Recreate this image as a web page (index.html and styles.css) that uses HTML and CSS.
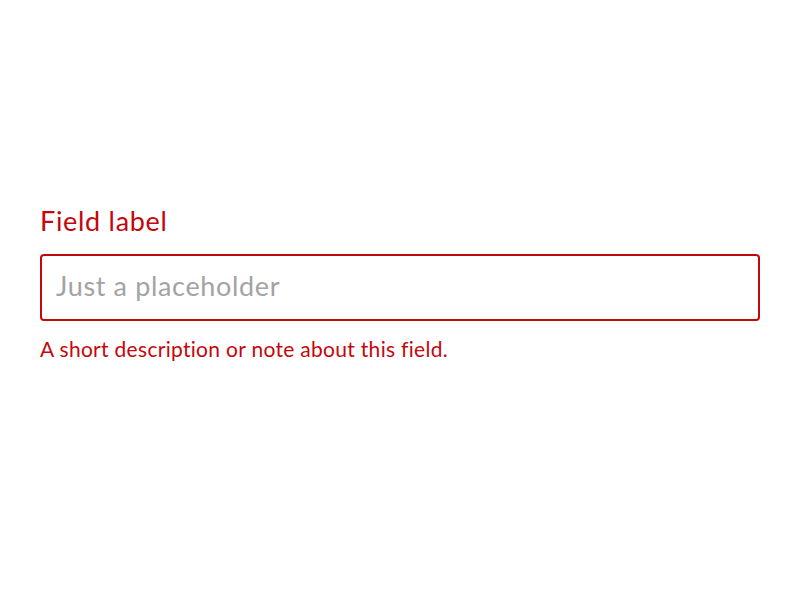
FILE: index.html
```html
<!DOCTYPE html>
<html>
<head>
<meta charset="utf-8">
<link rel="stylesheet" href="styles.css">
</head>
<body>
<div class="field">
  <label class="label" for="f">Field label</label>
  <input class="input" id="f" type="text" placeholder="Just a placeholder">
  <p class="note">A short description or note about this field.</p>
</div>
</body>
</html>
```

FILE: styles.css
```css
html, body {
  margin: 0;
  background: #fff;
}
body {
  font-family: Lato, "Open Sans", sans-serif;
}
.field {
  display: flex;
  flex-direction: column;
  padding: 204px 40px 0;
}
.label {
  color: #c4070d;
  font-size: 27px;
  line-height: 34px;
  letter-spacing: 0.7px;
  margin-bottom: 16px;
}
.input {
  box-sizing: border-box;
  width: 720px;
  height: 67px;
  border: 2px solid #c4070d;
  border-radius: 4px;
  padding: 0 14px 5px;
  font-family: inherit;
  font-size: 27px;
  letter-spacing: 0.65px;
  outline: none;
  background: #fff;
}
.input::placeholder {
  color: #a3a3a3;
  opacity: 1;
}
.note {
  margin: 15px 0 0;
  color: #c4070d;
  font-size: 21px;
  line-height: 26px;
  letter-spacing: 0.3px;
}
```
